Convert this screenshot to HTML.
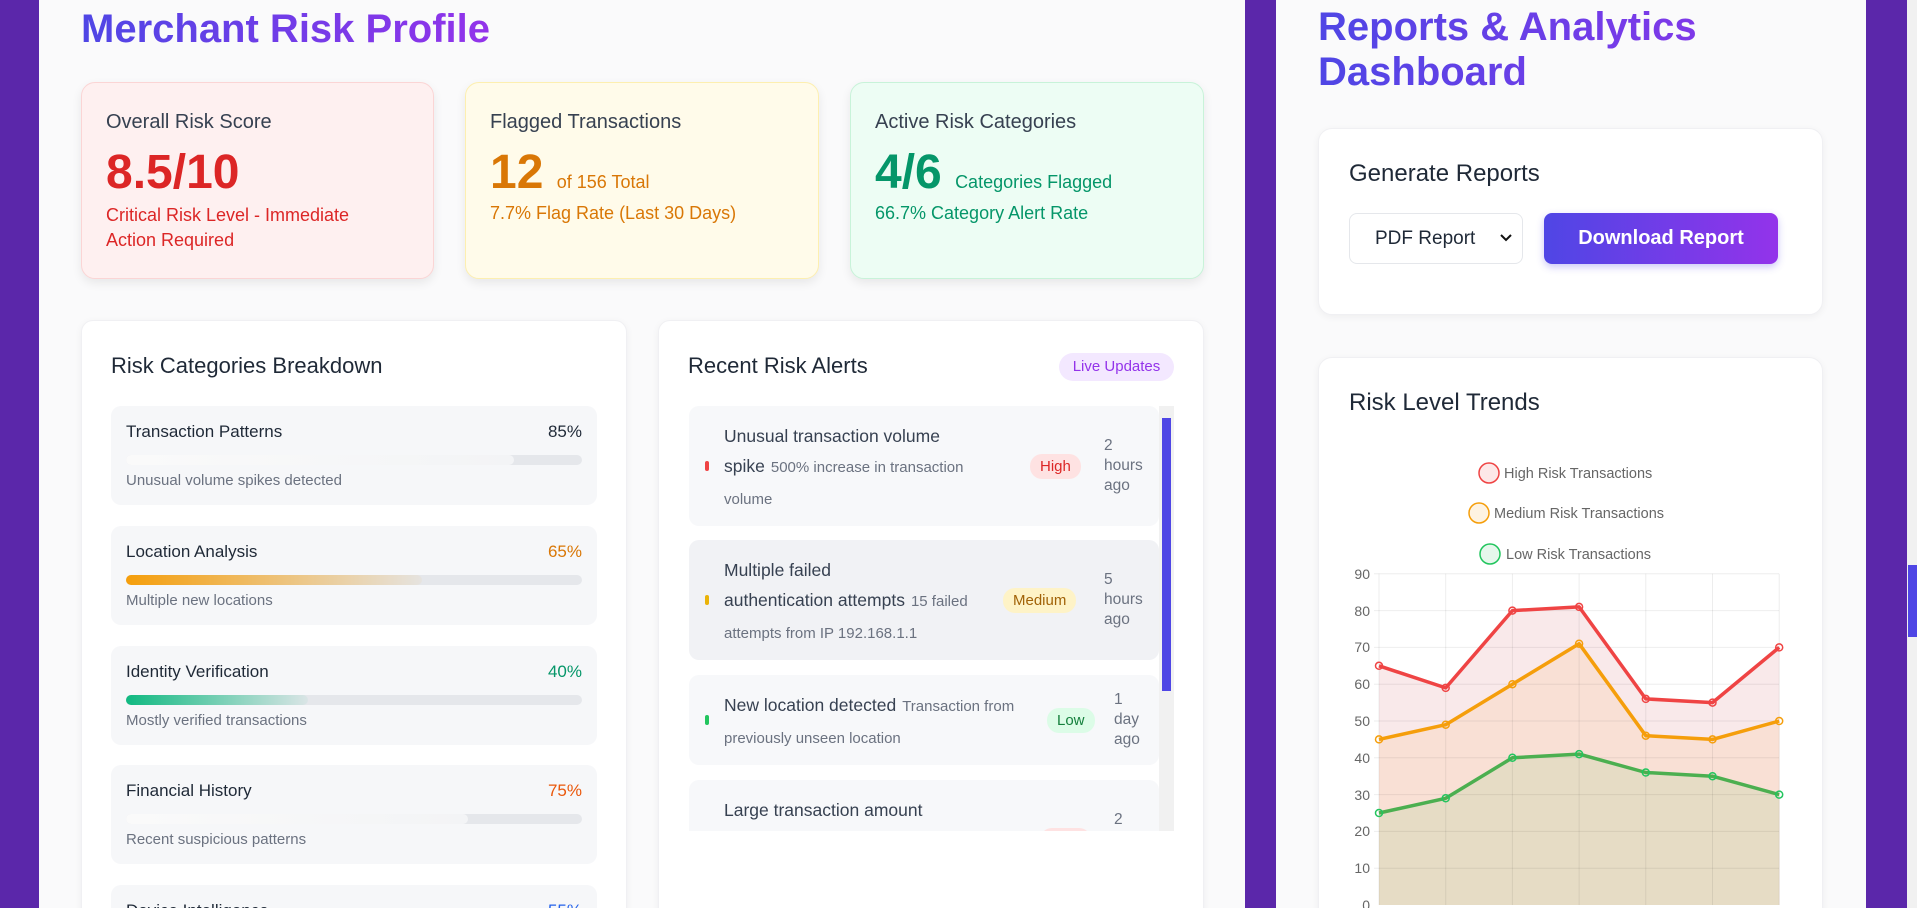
<!DOCTYPE html>
<html><head><meta charset="utf-8"><style>
*{margin:0;padding:0;box-sizing:border-box}
html,body{width:1917px;height:908px;overflow:hidden}
body{background:#5b27aa;font-family:"Liberation Sans",sans-serif;position:relative;color:#1f2937}
#root{position:absolute;left:0;top:0;width:1917px;height:908px;overflow:hidden}
.abs{position:absolute}
.panel{background:#fafafb}
.grad{background:linear-gradient(90deg,#4f46e5,#9333ea);-webkit-background-clip:text;background-clip:text;color:transparent;font-weight:bold}
.card{position:absolute;border-radius:14px;box-shadow:0 4px 10px rgba(0,0,0,.08)}
.st{position:absolute;border-radius:12px;background:#fff;box-shadow:0 2px 8px rgba(0,0,0,.05);border:1px solid #f0f0f3}
.item{position:absolute;left:111px;width:486px;height:99px;background:#f6f7f9;border-radius:10px}
.item .t{position:absolute;left:15px;top:16px;font-size:17px;color:#1f2937}
.item .p{position:absolute;right:15px;top:16px;font-size:17px}
.item .bar{position:absolute;left:15px;right:15px;top:49px;height:10px;border-radius:5px;background:#e5e7eb}
.item .d{position:absolute;left:15px;top:66px;font-size:15px;color:#6b7280}
.al{position:absolute;left:689px;width:470px;border-radius:10px;background:#f7f8fa}
.al .dot{position:absolute;left:16px;width:4px;height:10px;border-radius:2px}
.al .tx{position:absolute;left:35px;width:275px;font-size:17.5px;line-height:30px;color:#374151}
.al .tx small{font-size:15px;color:#6b7280;margin-left:6px}
.al .bd{position:absolute;padding:4px 10px;border-radius:12px;font-size:15px}
.al .tm{position:absolute;font-size:15.5px;line-height:20px;color:#6b7280}
</style></head><body><div id="root">
<div class="abs panel" style="left:39px;top:0;width:1206px;height:908px"></div>
<div class="abs panel" style="left:1276px;top:0;width:590px;height:908px"></div>
<div class="abs" style="left:1907px;top:0;width:10px;height:908px;background:#f1f1f1"></div>
<div class="abs" style="left:1908px;top:565px;width:9px;height:72px;background:#4f46e5"></div>

<div class="abs grad" style="left:81px;top:4px;font-size:40px;line-height:50px">Merchant Risk Profile</div>

<div class="card" style="left:81px;top:82px;width:353px;height:197px;background:#fef0f0;border:1px solid #fbd5d5">
 <div class="abs" style="left:24px;top:28px;font-size:20px;color:#374151">Overall Risk Score</div>
 <div class="abs" style="left:24px;top:62px;font-size:48px;font-weight:bold;color:#dc2626">8.5/10</div>
 <div class="abs" style="left:24px;top:120px;width:260px;font-size:18px;line-height:25px;color:#dc2626">Critical Risk Level - Immediate Action Required</div>
</div>
<div class="card" style="left:465px;top:82px;width:354px;height:197px;background:#fffbea;border:1px solid #fdefb0">
 <div class="abs" style="left:24px;top:28px;font-size:20px;color:#374151">Flagged Transactions</div>
 <div class="abs" style="left:24px;top:62px;font-size:48px;font-weight:bold;color:#d97706">12 <span style="font-size:18px;font-weight:normal">of 156 Total</span></div>
 <div class="abs" style="left:24px;top:120px;font-size:18px;color:#d97706">7.7% Flag Rate (Last 30 Days)</div>
</div>
<div class="card" style="left:850px;top:82px;width:354px;height:197px;background:#edfdf4;border:1px solid #c8f3d9">
 <div class="abs" style="left:24px;top:28px;font-size:20px;color:#374151">Active Risk Categories</div>
 <div class="abs" style="left:24px;top:62px;font-size:48px;font-weight:bold;color:#059669">4/6 <span style="font-size:18px;font-weight:normal">Categories Flagged</span></div>
 <div class="abs" style="left:24px;top:120px;font-size:18px;color:#059669">66.7% Category Alert Rate</div>
</div>

<div class="st" style="left:81px;top:320px;width:546px;height:620px"></div>
<div class="abs" style="left:111px;top:353px;font-size:22px;color:#1f2937">Risk Categories Breakdown</div>
<div class="item" style="top:406px"><div class="t">Transaction Patterns</div><div class="p" style="color:#1f2937">85%</div><div class="bar"><div style="width:85%;height:100%;border-radius:5px;background:linear-gradient(90deg,#fafafa,#f3f4f6)"></div></div><div class="d">Unusual volume spikes detected</div></div>
<div class="item" style="top:526px"><div class="t">Location Analysis</div><div class="p" style="color:#d97706">65%</div><div class="bar"><div style="width:65%;height:100%;border-radius:5px;background:linear-gradient(90deg,#f59e0b,rgba(245,158,11,0.05))"></div></div><div class="d">Multiple new locations</div></div>
<div class="item" style="top:646px"><div class="t">Identity Verification</div><div class="p" style="color:#059669">40%</div><div class="bar"><div style="width:40%;height:100%;border-radius:5px;background:linear-gradient(90deg,#10b981,rgba(16,185,129,0.05))"></div></div><div class="d">Mostly verified transactions</div></div>
<div class="item" style="top:765px"><div class="t">Financial History</div><div class="p" style="color:#ea580c">75%</div><div class="bar"><div style="width:75%;height:100%;border-radius:5px;background:linear-gradient(90deg,#fafafa,#f3f4f6)"></div></div><div class="d">Recent suspicious patterns</div></div>
<div class="item" style="top:885px"><div class="t">Device Intelligence</div><div class="p" style="color:#2563eb">55%</div></div>

<div class="st" style="left:658px;top:320px;width:546px;height:620px"></div>
<div class="abs" style="left:688px;top:353px;font-size:22px;color:#1f2937">Recent Risk Alerts</div>
<div class="abs" style="left:1059px;top:353px;width:115px;height:28px;border-radius:14px;background:#f3e8ff;color:#9333ea;font-size:15px;line-height:28px;text-align:center">Live Updates</div>
<div class="abs" style="left:688px;top:406px;width:486px;height:425px;overflow:hidden">
 <div style="position:absolute;left:471px;top:0;width:15px;height:425px;background:#f1f1f1"></div>
 <div style="position:absolute;left:474px;top:12px;width:9px;height:273px;background:#4f46e5"></div>
</div>
<div class="abs" style="left:688px;top:406px;width:471px;height:425px;overflow:hidden">
 <div class="al" style="left:1px;top:0;height:120px"><div class="dot" style="top:55px;background:#ef4444"></div>
  <div class="tx" style="top:15px">Unusual transaction volume spike<small>500% increase in transaction volume</small></div>
  <div class="bd" style="left:341px;top:48px;background:#fee2e2;color:#dc2626">High</div>
  <div class="tm" style="left:415px;top:30px">2<br>hours<br>ago</div></div>
 <div class="al" style="left:1px;top:134px;height:120px;background:#f1f2f5"><div class="dot" style="top:55px;background:#eab308"></div>
  <div class="tx" style="top:15px;width:260px">Multiple failed<br>authentication attempts<small>15 failed attempts from IP 192.168.1.1</small></div>
  <div class="bd" style="left:314px;top:48px;background:#fef3c7;color:#a16207">Medium</div>
  <div class="tm" style="left:415px;top:30px">5<br>hours<br>ago</div></div>
 <div class="al" style="left:1px;top:269px;height:90px"><div class="dot" style="top:40px;background:#22c55e"></div>
  <div class="tx" style="top:15px;width:305px">New location detected<small>Transaction from previously unseen location</small></div>
  <div class="bd" style="left:358px;top:33px;background:#dcfce7;color:#15803d">Low</div>
  <div class="tm" style="left:425px;top:15px">1<br>day<br>ago</div></div>
 <div class="al" style="left:1px;top:374px;height:120px"><div class="dot" style="top:55px;background:#ef4444"></div>
  <div class="tx" style="top:15px;width:200px">Large transaction amount</div>
  <div class="bd" style="left:351px;top:48px;background:#fee2e2;color:#dc2626">High</div>
  <div class="tm" style="left:425px;top:30px">2</div></div>
</div>

<div class="abs grad" style="left:1318px;top:5px;font-size:40px;line-height:45px;width:540px">Reports &amp; Analytics Dashboard</div>
<div class="st" style="left:1318px;top:128px;width:505px;height:187px;border-radius:14px"></div>
<div class="abs" style="left:1349px;top:160px;font-size:24px;color:#1f2937">Generate Reports</div>
<div class="abs" style="left:1349px;top:213px;width:174px;height:51px;border:1px solid #e5e7eb;border-radius:8px;background:#fff;font-size:19px;line-height:49px;padding-left:25px;color:#1f2937">PDF Report<svg style="position:absolute;right:10px;top:20px" width="12" height="8"><path d="M1 1l5 5 5-5" fill="none" stroke="#111" stroke-width="2"/></svg></div>
<div class="abs" style="left:1544px;top:213px;width:234px;height:51px;border-radius:8px;background:linear-gradient(90deg,#4f46e5,#9333ea);color:#fff;font-size:20px;font-weight:bold;line-height:51px;text-align:center;box-shadow:0 3px 8px rgba(79,70,229,.3)">Download Report</div>

<div class="st" style="left:1318px;top:357px;width:505px;height:600px;border-radius:14px"></div>
<div class="abs" style="left:1349px;top:389px;font-size:24px;color:#1f2937">Risk Level Trends</div>

<svg class="abs" style="left:1330px;top:455px" width="480" height="453" viewBox="0 -105 480 453">
 <g font-family="Liberation Sans" font-size="14.5" fill="#666">
  <circle cx="159" cy="-87" r="10" fill="#fde8e8" stroke="#ef4444" stroke-width="1.5"/><text x="174" y="-82">High Risk Transactions</text>
  <circle cx="149" cy="-47" r="10" fill="#fef3e2" stroke="#f59e0b" stroke-width="1.5"/><text x="164" y="-42">Medium Risk Transactions</text>
  <circle cx="160" cy="-6" r="10" fill="#e6f7ec" stroke="#22c55e" stroke-width="1.5"/><text x="176" y="-1">Low Risk Transactions</text>
 </g>
 <polygon fill="#f9e9ea" points="49,105.8 115.7,127.9 182.4,50.6 249.1,46.9 315.8,138.9 382.5,142.6 449.2,87.4 449.2,345 49,345"/>
 <polygon fill="#f9e0d5" points="49,179.4 115.7,164.7 182.4,124.2 249.1,83.7 315.8,175.7 382.5,179.4 449.2,161 449.2,345 49,345"/>
 <polygon fill="#e6dcc5" points="49,253 115.7,238.3 182.4,197.8 249.1,194.1 315.8,212.5 382.5,216.2 449.2,234.6 449.2,345 49,345"/>
 <g stroke="rgba(0,0,0,0.07)" stroke-width="1">
  <line x1="44" x2="449" y1="13.8" y2="13.8"/><line x1="44" x2="449" y1="50.6" y2="50.6"/><line x1="44" x2="449" y1="87.4" y2="87.4"/><line x1="44" x2="449" y1="124.2" y2="124.2"/><line x1="44" x2="449" y1="161" y2="161"/><line x1="44" x2="449" y1="197.8" y2="197.8"/><line x1="44" x2="449" y1="234.6" y2="234.6"/><line x1="44" x2="449" y1="271.4" y2="271.4"/><line x1="44" x2="449" y1="308.2" y2="308.2"/>
  <line x1="49" x2="49" y1="13.8" y2="345"/><line x1="115.7" x2="115.7" y1="13.8" y2="345"/><line x1="182.4" x2="182.4" y1="13.8" y2="345"/><line x1="249.1" x2="249.1" y1="13.8" y2="345"/><line x1="315.8" x2="315.8" y1="13.8" y2="345"/><line x1="382.5" x2="382.5" y1="13.8" y2="345"/><line x1="449.2" x2="449.2" y1="13.8" y2="345"/>
 </g>
 <g font-family="Liberation Sans" font-size="14" fill="#666" text-anchor="end">
  <text x="40" y="19">90</text><text x="40" y="56">80</text><text x="40" y="92">70</text><text x="40" y="129">60</text><text x="40" y="166">50</text><text x="40" y="203">40</text><text x="40" y="240">30</text><text x="40" y="276">20</text><text x="40" y="313">10</text><text x="40" y="350">0</text>
 </g>
 <g fill="none" stroke-width="3.5" stroke-linejoin="round">
  <polyline stroke="#ef4444" points="49,105.8 115.7,127.9 182.4,50.6 249.1,46.9 315.8,138.9 382.5,142.6 449.2,87.4"/>
  <polyline stroke="#f59e0b" points="49,179.4 115.7,164.7 182.4,124.2 249.1,83.7 315.8,175.7 382.5,179.4 449.2,161"/>
  <polyline stroke="#4caf50" points="49,253 115.7,238.3 182.4,197.8 249.1,194.1 315.8,212.5 382.5,216.2 449.2,234.6"/>
 </g>
 <g fill="none" stroke-width="1.5">
  <g stroke="#ef4444"><circle cx="49" cy="105.8" r="3.5"/><circle cx="115.7" cy="127.9" r="3.5"/><circle cx="182.4" cy="50.6" r="3.5"/><circle cx="249.1" cy="46.9" r="3.5"/><circle cx="315.8" cy="138.9" r="3.5"/><circle cx="382.5" cy="142.6" r="3.5"/><circle cx="449.2" cy="87.4" r="3.5"/></g>
  <g stroke="#f59e0b"><circle cx="49" cy="179.4" r="3.5"/><circle cx="115.7" cy="164.7" r="3.5"/><circle cx="182.4" cy="124.2" r="3.5"/><circle cx="249.1" cy="83.7" r="3.5"/><circle cx="315.8" cy="175.7" r="3.5"/><circle cx="382.5" cy="179.4" r="3.5"/><circle cx="449.2" cy="161" r="3.5"/></g>
  <g stroke="#22c55e"><circle cx="49" cy="253" r="3.5"/><circle cx="115.7" cy="238.3" r="3.5"/><circle cx="182.4" cy="197.8" r="3.5"/><circle cx="249.1" cy="194.1" r="3.5"/><circle cx="315.8" cy="212.5" r="3.5"/><circle cx="382.5" cy="216.2" r="3.5"/><circle cx="449.2" cy="234.6" r="3.5"/></g>
 </g>
</svg>
</div></body></html>
